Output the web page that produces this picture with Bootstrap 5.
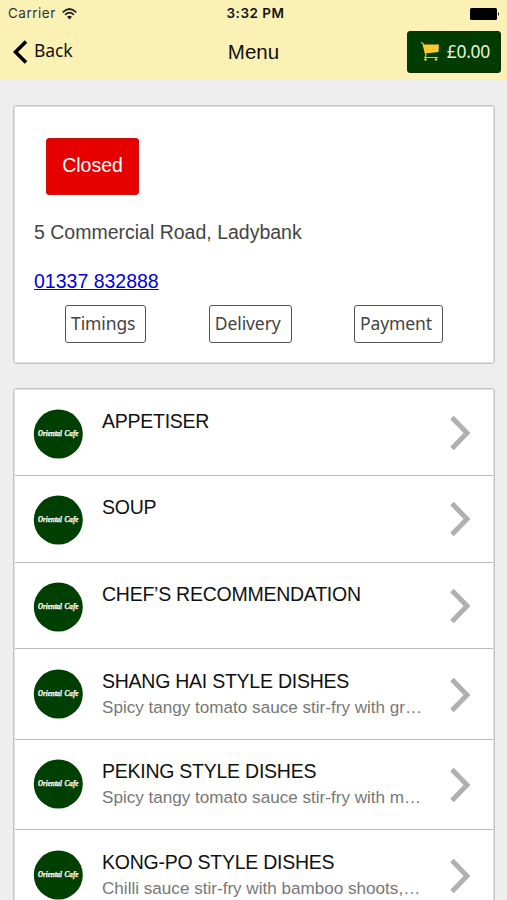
<!DOCTYPE html>
<html lang="en">
<head>
<meta charset="utf-8">
<meta name="viewport" content="width=device-width, initial-scale=1">
<title>Menu</title>
<link href="https://cdn.jsdelivr.net/npm/bootstrap@5.3.0/dist/css/bootstrap.min.css" rel="stylesheet">
<style>
body{background:#eee;font-family:"Liberation Sans",Arial,sans-serif;font-size:19.5px;line-height:24px;height:900px;overflow:hidden;color:#111}
.app-head{background:#fcf1b5;height:80px}
.status{height:27px;padding:0 7px 0 8px;font-family:Inter,sans-serif;font-size:13.5px;line-height:27px;display:grid;grid-template-columns:1fr auto 1fr}
.carrier{letter-spacing:.5px;color:#333}
.wifi{margin-left:6px}
.clock{letter-spacing:.5px;padding-left:3px}
.titlebar{height:53px;display:grid;grid-template-columns:1fr auto 1fr;padding:0 6px 0 13px}
.screen-title{padding:13px 7px 0 0;font-size:20.5px}
.humanist{font-family:"Noto Sans",sans-serif;font-size:17.5px}
.back-icon{margin-top:13px}
.back-label{letter-spacing:-.1px;line-height:24px;margin:11px 0 0 6px}
.basket{background:#003c00;color:#e9f2dc;width:94px;height:42px;border:1px solid #102d08;border-radius:3px;margin-top:4px;padding:0 10px 2px 12px}
.amount{letter-spacing:-.3px}
.panel{border:1.5px solid #c4c4c4;outline:1px solid #e0e0e0;outline-offset:-2px;border-radius:3px;background:#fff}
.info{margin:25px 12px 0 13px;height:259px;padding:32px 20px 0;color:#444}
.closed{background:#e60000;color:#fff;border:1px solid #c11;border-radius:3px;width:93px;height:57px;margin-left:12px;padding-bottom:3px}
.address{margin-top:25px}
.phone-row{margin-top:25px}
.phone{color:#0000e0}
.opt{border:1.5px solid #555;border-radius:3px;height:38px;padding:0 10px 0 5px;color:#444;background:#fff;line-height:34px;letter-spacing:-.1px}
.opts{padding:0 31px;margin-top:12px}
.menu{margin:24px 12px 0 13px}
.dish{height:86.8px;border-bottom:1.5px solid #bbb;padding:19.500px 24px 0 19px}
.dish.tall{height:90.4px}
.dish-text{margin-left:19px;width:325px}
.dish-name{letter-spacing:-.25px;white-space:nowrap}
.dish-note{font-size:17.1px;color:#777;line-height:24px;margin-top:3px;white-space:nowrap}
.arrow{margin-top:6px}
.tall .arrow{margin-top:8px}
.script{font-family:"Liberation Serif",serif;font-style:italic;font-weight:bold;font-size:8.5px;fill:#fff;stroke:#fff;stroke-width:.25}
</style>
<script src="https://cdn.jsdelivr.net/npm/bootstrap@5.3.0/dist/js/bootstrap.bundle.min.js"></script>
</head>
<body>
<svg width="0" height="0" class="d-none">
<symbol id="logo" viewBox="0 0 50 50"><circle cx="25.3" cy="25" r="24.500" fill="#003f02"/><text class="script" x="5" y="27" textLength="24" lengthAdjust="spacingAndGlyphs">Oriental</text><text class="script" x="31.500" y="27" textLength="14" lengthAdjust="spacingAndGlyphs">Cafe</text></symbol>
<symbol id="next" viewBox="0 0 20 36"><path d="M2 2.500 17 18 2 33.500" fill="none" stroke="#b0b0b0" stroke-width="5"/></symbol>
</svg>
<header class="app-head">
<div class="status">
<div class="d-flex align-items-center"><span class="carrier">Carrier</span>
<svg class="wifi" width="15" height="12" viewBox="0 0 15 12"><g fill="none" stroke="#222" stroke-width="1.700"><path d="M.7 4.300Q7.500-2.300 14.300 4.300"/><path d="M3.100 6.800Q7.500 2.600 11.900 6.800"/></g><path d="M5 8.800Q7.500 6.800 10 8.800L7.500 11.500Z" fill="#222"/></svg></div>
<div class="clock fw-semibold">3:32 PM</div>
<div class="d-flex justify-content-end align-items-center"><svg width="30" height="12" viewBox="0 0 30 12"><rect width="27" height="12" rx="1.500"/><path d="M28 4q2 2 0 4z"/></svg></div>
</div>
<div class="titlebar">
<div class="d-flex align-items-start"><svg class="back-icon" width="15" height="24" viewBox="0 0 15 24"><path d="M13 1.500 2.500 12 13 22.500" fill="none" stroke="#000" stroke-width="3.600"/></svg><span class="humanist back-label">Back</span></div>
<div class="screen-title">Menu</div>
<div class="d-flex justify-content-end"><div class="basket humanist d-flex align-items-center justify-content-between"><svg width="20" height="20" viewBox="0 0 20 20"><path d="M1 1.500 3 2.500 6 14.500 5 16.500H18" fill="none" stroke="#e9c42e" stroke-width="1.200"/><path d="M3 3.500H19L18.500 11 5 12.500Z" fill="#fdc92e"/><circle cx="5.500" cy="18.500" r="1.300" fill="#fbc92e"/><circle cx="16" cy="18.500" r="1.300" fill="#fbc92e"/></svg><span class="amount">£0.00</span></div></div>
</div>
</header>
<main>
<section class="panel info">
<div class="closed d-flex align-items-center justify-content-center">Closed</div>
<div class="address">5 Commercial Road, Ladybank</div>
<div class="phone-row"><a class="phone" href="#">01337 832888</a></div>
<div class="opts d-flex justify-content-between"><div class="opt humanist">Timings</div><div class="opt humanist">Delivery</div><div class="opt humanist">Payment</div></div>
</section>
<section class="panel menu">
<div class="dish d-flex"><svg width="50" height="50"><use href="#logo"/></svg><div class="dish-text"><div class="dish-name">APPETISER</div></div><svg class="arrow ms-auto" width="20" height="36"><use href="#next"/></svg></div>
<div class="dish d-flex"><svg width="50" height="50"><use href="#logo"/></svg><div class="dish-text"><div class="dish-name">SOUP</div></div><svg class="arrow ms-auto" width="20" height="36"><use href="#next"/></svg></div>
<div class="dish d-flex"><svg width="50" height="50"><use href="#logo"/></svg><div class="dish-text"><div class="dish-name">CHEF’S RECOMMENDATION</div></div><svg class="arrow ms-auto" width="20" height="36"><use href="#next"/></svg></div>
<div class="dish tall d-flex"><svg width="50" height="50"><use href="#logo"/></svg><div class="dish-text"><div class="dish-name">SHANG HAI STYLE DISHES</div><div class="dish-note">Spicy tangy tomato sauce stir-fry with gr…</div></div><svg class="arrow ms-auto" width="20" height="36"><use href="#next"/></svg></div>
<div class="dish tall d-flex"><svg width="50" height="50"><use href="#logo"/></svg><div class="dish-text"><div class="dish-name">PEKING STYLE DISHES</div><div class="dish-note">Spicy tangy tomato sauce stir-fry with m…</div></div><svg class="arrow ms-auto" width="20" height="36"><use href="#next"/></svg></div>
<div class="dish tall d-flex"><svg width="50" height="50"><use href="#logo"/></svg><div class="dish-text"><div class="dish-name">KONG-PO STYLE DISHES</div><div class="dish-note">Chilli sauce stir-fry with bamboo shoots,…</div></div><svg class="arrow ms-auto" width="20" height="36"><use href="#next"/></svg></div>
</section>
</main>
</body>
</html>
